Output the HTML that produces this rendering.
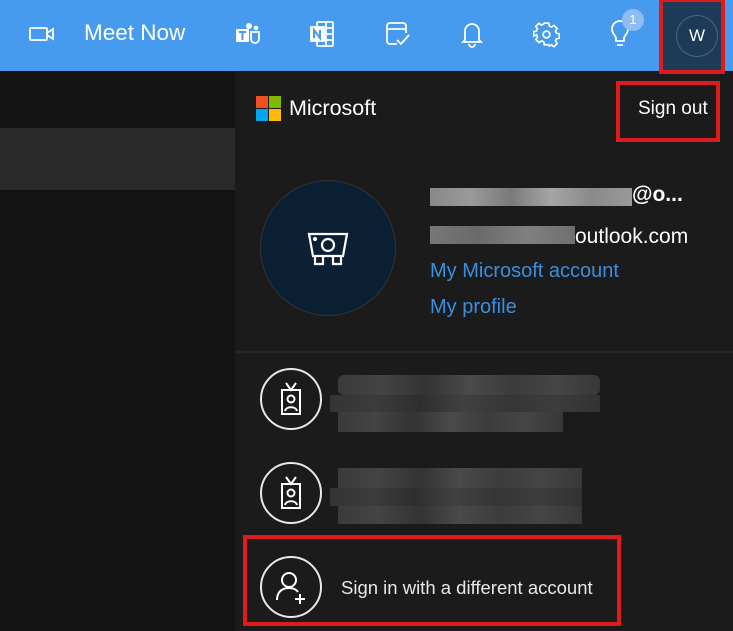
<!DOCTYPE html>
<html><head><meta charset="utf-8"><style>
*{margin:0;padding:0;box-sizing:border-box}
body{width:733px;height:631px;overflow:hidden;background:#131313;font-family:"Liberation Sans",sans-serif;position:relative;color:#fff}
.abs{position:absolute}
.hdr{left:0;top:0;width:733px;height:71px;background:#479bef}
.panel{left:235px;top:71px;width:498px;height:560px;background:#1b1b1b}
.red{border:4px solid #e01b1b}
.blur{background:linear-gradient(90deg,#888,#9a9a9a,#7a7a7a,#a5a5a5,#8a8a8a,#999)}
.dblur{background:linear-gradient(90deg,#3a3a3a,#444,#333,#4a4a4a,#3c3c3c,#454545,#383838)}
.circ{border:2px solid #e8e8e8;border-radius:50%;width:62px;height:62px}
</style></head><body>
<div class="abs hdr"></div>
<div class="abs" style="left:0;top:128px;width:235px;height:62px;background:#2a2a2a"></div>
<div class="abs panel"></div>
<div class="abs" style="left:235px;top:351px;width:498px;height:2px;background:#262626"></div>

<svg class="abs" style="left:28px;top:24px" width="30" height="20" viewBox="0 0 30 20" fill="none" stroke="#fff" stroke-width="1.8"><rect x="2" y="4" width="17" height="12" rx="1"/><path d="M19 9l6-4v10l-6-4"/></svg>
<div class="abs" style="left:84px;top:20px;font-size:22.5px;color:#fff">Meet Now</div>
<svg class="abs" style="left:234px;top:21px" width="26" height="26" viewBox="0 0 26 26" fill="#fff"><circle cx="15" cy="5" r="3"/><circle cx="22" cy="7" r="2.3"/><rect x="2" y="8" width="13" height="13" rx="1"/><path d="M17 11h8v7a4 4 0 0 1-8 0z" fill="none" stroke="#fff" stroke-width="1.8"/><path d="M5 11h7M8.5 11v8" stroke="#479bef" stroke-width="2"/></svg>
<svg class="abs" style="left:309px;top:20px" width="26" height="28" viewBox="0 0 26 28" fill="none" stroke="#fff" stroke-width="1.8"><rect x="8" y="2" width="16" height="24" rx="1"/><path d="M17 2v24M17 8h7M17 14h7M17 20h7"/><rect x="2" y="7" width="13" height="14" fill="#fff"/><path d="M5 18V10l6 8V10" stroke="#479bef" stroke-width="2"/></svg>
<svg class="abs" style="left:384px;top:20px" width="28" height="28" viewBox="0 0 28 28" fill="none" stroke="#fff" stroke-width="1.8"><path d="M13 24H6a3 3 0 0 1-3-3V6a3 3 0 0 1 3-3h13a3 3 0 0 1 3 3v7"/><path d="M3 9h19"/><path d="M13 20l4 4 8-9"/></svg>
<svg class="abs" style="left:459px;top:19px" width="26" height="30" viewBox="0 0 26 30" fill="none" stroke="#fff" stroke-width="1.8"><path d="M6 21V12a7 7 0 0 1 14 0v9l2 2H4z"/><path d="M10 25a3 3 0 0 0 6 0"/></svg>
<svg class="abs" style="left:533px;top:21px" width="27" height="27" viewBox="0 0 24 24" fill="none" stroke="#fff" stroke-width="1.6"><circle cx="12" cy="12" r="3"/><path d="M10 2h4l.6 2.7 2 .9 2.4-1.5 2.8 2.8-1.5 2.4.9 2 2.7.6v4l-2.7.6-.9 2 1.5 2.4-2.8 2.8-2.4-1.5-2 .9L14 22h-4l-.6-2.7-2-.9-2.4 1.5-2.8-2.8 1.5-2.4-.9-2L0 14v-4l2.7-.6.9-2-1.5-2.4 2.8-2.8 2.4 1.5 2-.9z" transform="translate(.5 0) scale(.96)"/></svg>
<svg class="abs" style="left:608px;top:20px" width="24" height="30" viewBox="0 0 24 30" fill="none" stroke="#fff" stroke-width="1.8"><path d="M8 21v-3c0-2-4-4-4-9a8 8 0 0 1 16 0c0 5-4 7-4 9v3z"/><path d="M9 25h6"/></svg>
<div class="abs" style="left:622px;top:9px;width:22px;height:22px;border-radius:50%;background:#8fbdf2;color:#fff;font-size:13px;text-align:center;line-height:22px">1</div>
<div class="abs" style="left:661px;top:0;width:64px;height:73px;background:#1d3a57"></div>
<div class="abs" style="left:676px;top:15px;width:42px;height:42px;border-radius:50%;border:1.5px solid #50657a;text-align:center;line-height:40px;font-size:17px;color:#fff">W</div>
<div class="abs red" style="left:659px;top:-2px;width:66px;height:76px"></div>

<div class="abs" style="left:256px;top:96px;width:12px;height:12px;background:#f25022"></div>
<div class="abs" style="left:269px;top:96px;width:12px;height:12px;background:#7fba00"></div>
<div class="abs" style="left:256px;top:109px;width:12px;height:12px;background:#00a4ef"></div>
<div class="abs" style="left:269px;top:109px;width:12px;height:12px;background:#ffb900"></div>
<div class="abs" style="left:289px;top:96px;font-size:21.5px;color:#fff">Microsoft</div>
<div class="abs" style="left:638px;top:98px;font-size:19px;color:#fff">Sign out</div>
<div class="abs red" style="left:616px;top:81px;width:104px;height:61px"></div>

<div class="abs" style="left:260px;top:180px;width:136px;height:136px;border-radius:50%;background:#0c2033;border:1px solid #333"></div>
<svg class="abs" style="left:306px;top:228px" width="44" height="42" viewBox="0 0 44 42" fill="none" stroke="#fff" stroke-width="2.2"><path d="M3 6h38l-4 22H7z"/><circle cx="22" cy="17" r="6"/><path d="M9 28v8h8v-8M27 28v8h8v-8"/><circle cx="9" cy="11" r="1" fill="#fff"/></svg>
<div class="abs blur" style="left:430px;top:188px;width:202px;height:18px"></div>
<div class="abs" style="left:632px;top:183px;font-size:21px;font-weight:bold;color:#fff">@o...</div>
<div class="abs" style="left:430px;top:226px;width:145px;height:18px;background:linear-gradient(90deg,#777,#6a6a6a,#808080,#6f6f6f)"></div>
<div class="abs" style="left:575px;top:225px;font-size:21px;color:#fff">outlook.com</div>
<div class="abs" style="left:430px;top:260px;font-size:20px;color:#3a8fe0">My Microsoft account</div>
<div class="abs" style="left:430px;top:296px;font-size:20px;color:#3a8fe0">My profile</div>

<div class="abs circ" style="left:260px;top:368px"></div>
<svg class="abs" style="left:277px;top:381px" width="28" height="36" viewBox="0 0 28 36" fill="none" stroke="#fff" stroke-width="2"><path d="M9 2l5 7 5-7"/><rect x="5" y="9" width="18" height="24"/><circle cx="14" cy="18" r="3.5"/><path d="M8 30c1-5 11-5 12 0"/></svg>
<div class="abs dblur" style="left:338px;top:375px;width:262px;height:20px;border-radius:6px"></div>
<div class="abs dblur" style="left:330px;top:395px;width:270px;height:17px;opacity:.8"></div>
<div class="abs dblur" style="left:338px;top:412px;width:225px;height:20px"></div>

<div class="abs circ" style="left:260px;top:462px"></div>
<svg class="abs" style="left:277px;top:475px" width="28" height="36" viewBox="0 0 28 36" fill="none" stroke="#fff" stroke-width="2"><path d="M9 2l5 7 5-7"/><rect x="5" y="9" width="18" height="24"/><circle cx="14" cy="18" r="3.5"/><path d="M8 30c1-5 11-5 12 0"/></svg>
<div class="abs dblur" style="left:338px;top:468px;width:244px;height:20px"></div>
<div class="abs dblur" style="left:330px;top:488px;width:252px;height:18px;opacity:.8"></div>
<div class="abs dblur" style="left:338px;top:506px;width:244px;height:18px"></div>

<div class="abs circ" style="left:260px;top:556px"></div>
<svg class="abs" style="left:274px;top:570px" width="38" height="36" viewBox="0 0 38 36" fill="none" stroke="#fff" stroke-width="2"><circle cx="15" cy="10" r="7"/><path d="M3 30c0-8 5-12 12-12 4 0 7 1 9 4"/><path d="M26 24v10M21 29h10"/></svg>
<div class="abs" style="left:341px;top:577px;font-size:18.5px;color:#e8e8e8">Sign in with a different account</div>
<div class="abs red" style="left:243px;top:535px;width:378px;height:91px"></div>
</body></html>
